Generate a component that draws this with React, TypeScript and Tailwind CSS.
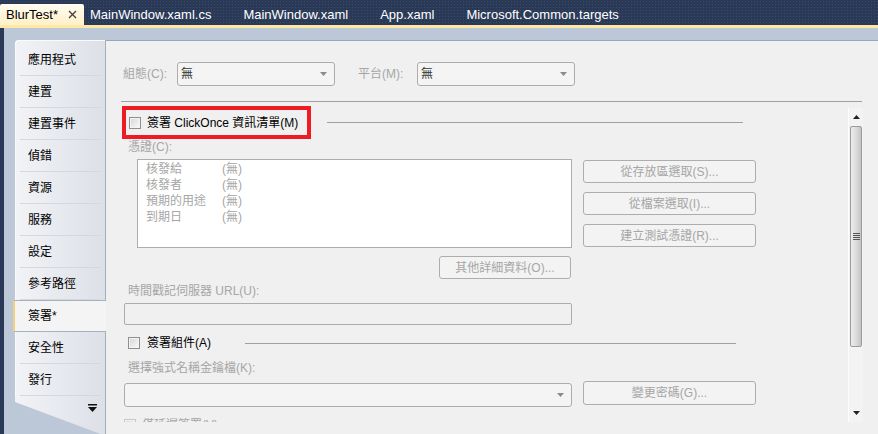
import React from "react";

const FONT = "font-['Liberation_Sans','Noto_Sans_CJK_TC',sans-serif]";

const tabs = ["MainWindow.xaml.cs", "MainWindow.xaml", "App.xaml", "Microsoft.Common.targets"];

const pages = ["應用程式", "建置", "建置事件", "偵錯", "資源", "服務", "設定", "參考路徑", "簽署*", "安全性", "發行"];

function Checkbox({ disabled }: { disabled?: boolean }) {
  return (
    <span
      className={`block h-[12px] w-[12px] shrink-0 border ${
        disabled ? "border-[#c6c6c6]" : "border-[#8e8f8f]"
      } bg-gradient-to-br from-[#d6d6d6] to-[#fbfbfb] shadow-[inset_0_0_0_1px_#f4f4f4]`}
    />
  );
}

function Arrow() {
  return (
    <svg width="7" height="4" viewBox="0 0 7 4" className="shrink-0">
      <path d="M0 0h7L3.5 4z" fill="#8a8a8a" />
    </svg>
  );
}

function Combo({ value, className = "" }: { value?: string; className?: string }) {
  return (
    <div
      className={`flex items-center justify-between rounded-[3px] border border-[#acacac] bg-[#f4f4f4] pl-[3px] pr-[7px] text-[12px] text-[#333] ${className}`}
    >
      <span>{value}</span>
      <Arrow />
    </div>
  );
}

function Btn({ children, className = "" }: { children: React.ReactNode; className?: string }) {
  return (
    <div
      className={`flex items-center justify-center rounded-[3px] border border-[#adadad] bg-[#f3f3f3] text-[12px] text-[#a6a6a6] ${className}`}
    >
      {children}
    </div>
  );
}

function Label({ children }: { children: React.ReactNode }) {
  return <div className="ml-[22px] h-[16px] text-[12px] leading-[16px] text-[#a6a6a6]">{children}</div>;
}

function Scrollbar() {
  return (
    <div className="mt-[2px] flex w-[15px] shrink-0 flex-col border-l border-[#fdfdfd] bg-[#f3f3f3]">
      <div className="flex h-[18px] items-center justify-center">
        <svg width="7" height="4" viewBox="0 0 7 4">
          <path d="M3.5 0L7 4H0z" fill="#222" />
        </svg>
      </div>
      <div className="mx-[1px] flex h-[221px] items-center justify-center rounded-[2px] border border-[#9c9c9c] bg-gradient-to-r from-[#ececec] via-[#dcdcdc] to-[#c4c4c4]">
        <div className="flex flex-col gap-[1px]">
          <span className="block h-px w-[7px] bg-[#555]" />
          <span className="block h-px w-[7px] bg-[#555]" />
          <span className="block h-px w-[7px] bg-[#555]" />
          <span className="block h-px w-[7px] bg-[#555]" />
        </div>
      </div>
      <div className="flex-1" />
      <div className="flex h-[18px] items-center justify-center">
        <svg width="7" height="4" viewBox="0 0 7 4">
          <path d="M0 0h7L3.5 4z" fill="#222" />
        </svg>
      </div>
    </div>
  );
}

function Sidebar() {
  return (
    <div className="flex w-[91px] shrink-0 flex-col rounded-tl-[4px] border-r border-[#a5adbb] bg-gradient-to-r from-[#f2f3f6] to-[#dce0e7] pt-[4px] shadow-[inset_1px_1px_0_#fbfbfc]">
      {pages.map((p) =>
        p === "簽署*" ? (
          <div
            key={p}
            className="-ml-[2px] -mr-px flex h-[32px] items-center border-y border-l-2 border-y-[#a9b1bf] border-l-[#f3d07a] bg-[#f4f4f4] pl-[13px] text-[12px] text-black"
          >
            {p}
          </div>
        ) : (
          <div key={p} className="mx-[5px] flex h-[32px] items-center border-b border-[#d3d7de] pl-[8px] text-[12px] text-black">
            {p}
          </div>
        )
      )}
      <div className="flex flex-1 justify-end bg-[#bcc7d8]">
        <div className="-mr-px flex w-[92px] justify-end border-r border-[#a5adbb] bg-gradient-to-r from-[#f2f3f6] to-[#dce0e7] pr-[8px] pt-[8px] [clip-path:polygon(0_0,100%_0,100%_100%,94%_100%,0_6px)]">
          <svg width="9" height="8" viewBox="0 0 9 8">
            <rect x="0" y="0" width="9" height="1.5" fill="#111" />
            <path d="M0 3h9L4.5 8z" fill="#111" />
          </svg>
        </div>
      </div>
    </div>
  );
}

export default function App() {
  return (
    <div className={`${FONT} flex h-[434px] w-[878px] flex-col overflow-hidden bg-[#2a3a56]`}>
      {/* document tabs */}
      <div className="flex h-[25px] shrink-0 items-end bg-[#2a3a56] bg-[radial-gradient(#3a4b6b_1px,transparent_1px)] bg-[length:3px_3px]">
        <div className="flex h-[21px] items-center rounded-t-[2px] bg-gradient-to-b from-[#fffcf3] to-[#fff0c6] pl-[6px] pr-[6px] text-[13px] text-black">
          <span>BlurTest*</span>
          <svg width="9" height="9" viewBox="0 0 9 9" className="ml-[10px] mr-[1px]">
            <path d="M1 1l7 7M8 1L1 8" stroke="#444" strokeWidth="1.4" />
          </svg>
        </div>
        {tabs.map((t) => (
          <div key={t} className="flex h-[21px] items-center pl-[6px] pr-[26px] text-[13px] text-white">
            {t}
          </div>
        ))}
      </div>
      <div className="h-[3px] shrink-0 bg-[#ffe8a6]" />

      <div className="ml-[4px] flex min-h-0 flex-1 bg-[#bcc7d8] pl-[11px] pt-[12px]">
        <Sidebar />

        {/* property page */}
        <div className="flex min-w-0 flex-1 flex-col border-t border-[#9aa6ba] bg-[#f0f0f0]">
          <div className="mt-[21px] flex h-[24px] items-center">
            <span className="ml-[17px] w-[54px] text-[12px] text-[#a6a6a6]">組態(C):</span>
            <Combo value="無" className="h-[24px] w-[158px]" />
            <span className="ml-[23px] w-[59px] text-[12px] text-[#a6a6a6]">平台(M):</span>
            <Combo value="無" className="h-[24px] w-[158px]" />
          </div>
          <div className="ml-[15px] mr-[16px] mt-[15px] h-px shrink-0 bg-[#a0a0a0]" />

          <div className="mr-[15px] mt-[4px] flex h-[316px] shrink-0">
            <div className="flex min-w-0 flex-1 flex-col overflow-hidden">
              {/* sign manifest */}
              <div className="flex shrink-0 items-center">
                <div className="ml-[16px] flex h-[33px] w-[189px] shrink-0 items-center border-4 border-[#ed1c24] pl-[3px]">
                  <Checkbox />
                  <span className="ml-[6px] whitespace-nowrap text-[12px] text-black">簽署 ClickOnce 資訊清單(M)</span>
                </div>
                <div className="ml-[16px] h-px w-[416px] bg-[#a0a0a0]" />
              </div>

              <Label>憑證(C):</Label>

              <div className="mt-[4px] flex shrink-0 items-start">
                <div className="ml-[31px] h-[89px] w-[435px] shrink-0 border border-[#abadb3] bg-white pl-[8px] pt-px text-[12px] leading-[16px] text-[#a6a6a6]">
                  {[
                    ["核發給", "(無)"],
                    ["核發者", "(無)"],
                    ["預期的用途", "(無)"],
                    ["到期日", "(無)"],
                  ].map(([k, v]) => (
                    <div key={k} className="flex">
                      <span className="w-[76px]">{k}</span>
                      <span>{v}</span>
                    </div>
                  ))}
                </div>
                <div className="ml-[11px] mt-px flex w-[173px] shrink-0 flex-col gap-[9px]">
                  <Btn className="h-[23px]">從存放區選取(S)...</Btn>
                  <Btn className="h-[23px]">從檔案選取(I)...</Btn>
                  <Btn className="h-[23px]">建立測試憑證(R)...</Btn>
                </div>
              </div>

              <div className="mt-[8px] flex shrink-0">
                <Btn className="ml-[333px] h-[23px] w-[132px]">其他詳細資料(O)...</Btn>
              </div>

              <div className="mt-[4px]">
                <Label>時間戳記伺服器 URL(U):</Label>
              </div>
              <div className="ml-[18px] mt-[4px] h-[22px] w-[448px] shrink-0 rounded-[2px] border border-[#acacac] bg-[#f0f0f0]" />

              {/* sign assembly */}
              <div className="ml-[22px] mt-[8px] flex h-[20px] w-[608px] shrink-0 items-center">
                <Checkbox />
                <span className="ml-[7px] w-[98px] text-[12px] text-black">簽署組件(A)</span>
                <div className="h-px flex-1 bg-[#a0a0a0]" />
              </div>

              <div className="mt-[7px]">
                <Label>選擇強式名稱金鑰檔(K):</Label>
              </div>

              <div className="mt-[5px] flex shrink-0 items-start">
                <Combo className="ml-[18px] mt-[2px] h-[24px] w-[448px] shrink-0" />
                <Btn className="ml-[11px] h-[24px] w-[173px] shrink-0">變更密碼(G)...</Btn>
              </div>

              <div className="ml-[18px] mt-[9px] flex shrink-0 items-center">
                <Checkbox disabled />
                <span className="ml-[6px] text-[12px] text-[#a6a6a6]">僅延遲簽署(V)</span>
              </div>
            </div>
            <Scrollbar />
          </div>
        </div>
      </div>
    </div>
  );
}
